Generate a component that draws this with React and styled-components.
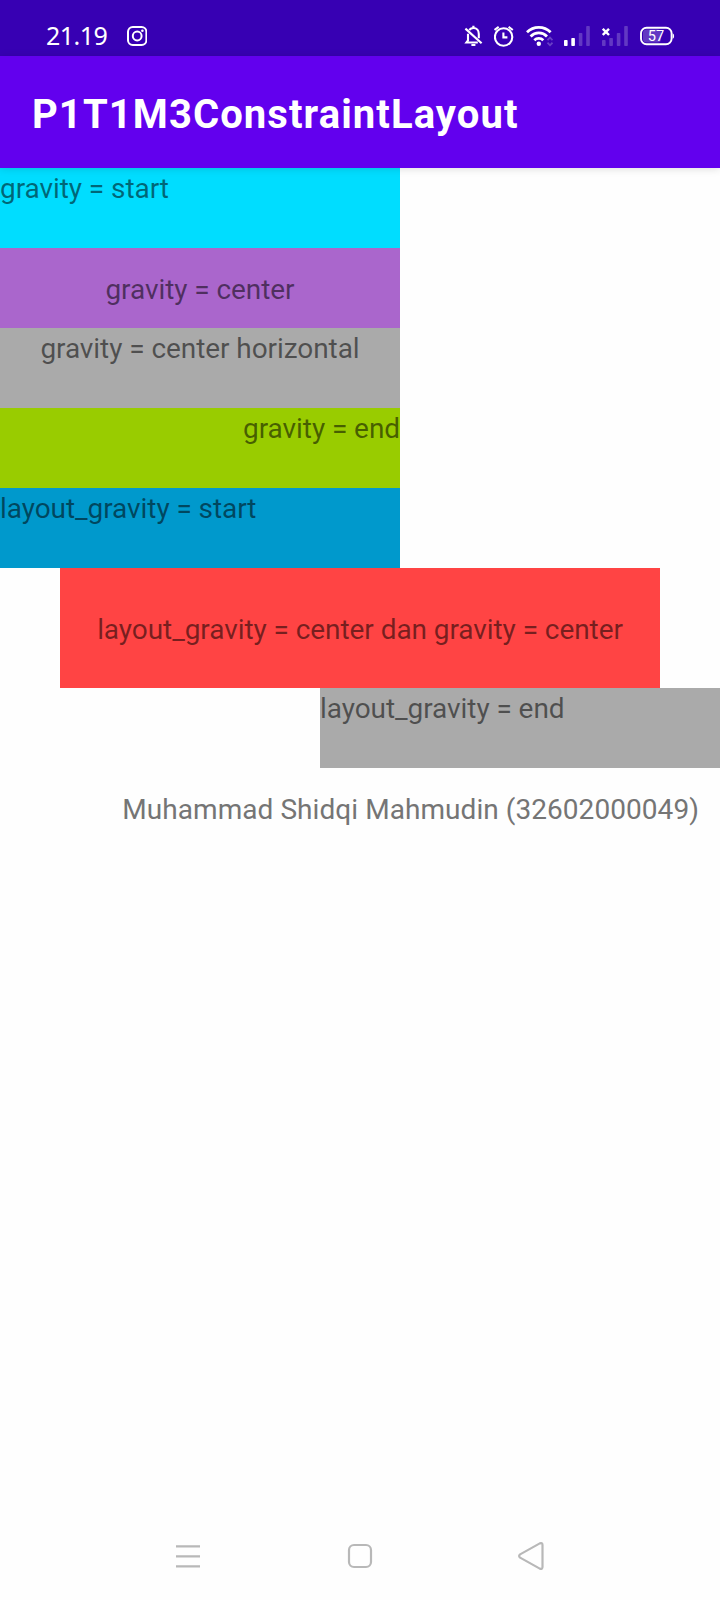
import React from "react";
import styled, { createGlobalStyle } from "styled-components";

const GlobalStyle = createGlobalStyle`
  body { margin: 0; background: #fff; }
  * { box-sizing: border-box; }
`;

const Screen = styled.div`
  width: 720px;
  height: 1600px;
  display: flex;
  flex-direction: column;
  background: #fefefe;
  font-family: Roboto, "Liberation Sans", sans-serif;
  overflow: hidden;
`;

const StatusBar = styled.header`
  height: 56px;
  flex: none;
  display: flex;
  align-items: flex-start;
  padding: 15px 44px 0 46px;
  background: #3700b3;
  color: #fff;
`;

const Clock = styled.span`
  flex: none;
  width: 81px;
  font: 400 25px/40px "Noto Sans", sans-serif;
  letter-spacing: -0.5px;
  white-space: nowrap;
`;

const StatusIcon = styled.svg`
  display: block;
  flex: none;
  width: ${(p) => p.$w}px;
  height: 28px;
  margin-left: ${(p) => p.$gap || 0}px;
  margin-top: 7px;
`;

const AppBar = styled.div`
  height: 112px;
  flex: none;
  display: flex;
  align-items: center;
  padding: 6px 32px 0;
  background: #6200ee;
  box-shadow: 0 1px 8px rgba(0, 0, 0, 0.13);
  z-index: 1;
`;

const Title = styled.h1`
  margin: 0;
  font-size: 40px;
  line-height: 48px;
  font-weight: 700;
  letter-spacing: 1.08px;
  color: #fff;
  white-space: nowrap;
`;

const Content = styled.main`
  flex: 1;
  display: flex;
  flex-direction: column;
`;

const Label = styled.div`
  flex: none;
  display: flex;
  width: ${(p) => p.$width || 400}px;
  height: ${(p) => p.$height || 80}px;
  padding-top: ${(p) => (p.$align === "center" ? 4 : 2)}px;
  align-self: ${(p) => p.$self || "flex-start"};
  align-items: ${(p) => p.$align || "flex-start"};
  justify-content: ${(p) => p.$justify || "flex-start"};
  background: ${(p) => p.$color};
  color: rgba(0, 0, 0, 0.54);
  font-size: 28px;
  line-height: 38px;
  letter-spacing: -0.07px;
  white-space: nowrap;
`;

const Author = styled.p`
  margin: 23px 21px 0 0;
  align-self: flex-end;
  color: #757575;
  font-size: 28px;
  line-height: 38px;
  letter-spacing: 0.06px;
  white-space: nowrap;
`;

const NavBar = styled.nav`
  height: 88px;
  flex: none;
  display: flex;
  justify-content: space-between;
  align-items: center;
  padding: 0 174px;
`;

const NavIcon = styled.svg`
  display: block;
  width: 28px;
  height: 28px;
  fill: none;
  stroke: #b8b8b8;
  stroke-width: 2.2;
  stroke-linejoin: round;
`;

const labels = [
  { text: "gravity = start", $color: "#00ddff" },
  { text: "gravity = center", $color: "#aa66cc", $align: "center", $justify: "center" },
  { text: "gravity = center horizontal", $color: "#aaaaaa", $justify: "center" },
  { text: "gravity = end", $color: "#99cc00", $justify: "flex-end" },
  { text: "layout_gravity = start", $color: "#0099cc" },
  {
    text: "layout_gravity = center dan gravity = center",
    $color: "#ff4444",
    $width: 600,
    $height: 120,
    $self: "center",
    $align: "center",
    $justify: "center",
  },
  { text: "layout_gravity = end", $color: "#aaaaaa", $self: "flex-end" },
];

function Bars({ active }) {
  return [
    [0, 40, 6],
    [7.3, 38, 8],
    [14.8, 33, 13],
    [22.2, 26, 20],
  ].map(([x, y, h], i) => (
    <rect key={x} x={x} y={y} width="3.6" height={h} rx="0.8" fill="#fff" opacity={i < active ? 1 : 0.22} />
  ));
}

function StatusIcons() {
  return (
    <>
      <StatusIcon $w={20} viewBox="127 22 20 28" fill="none" stroke="#fff">
        <rect x="128" y="27" width="18.4" height="18" rx="4.8" strokeWidth="2" />
        <circle cx="137.2" cy="36" r="4.4" strokeWidth="2" />
        <circle cx="142.4" cy="30.8" r="1.3" fill="#fff" stroke="none" />
      </StatusIcon>
      <StatusIcon $w={20} $gap={317} viewBox="464 22 20 28" fill="none" stroke="#fff" strokeWidth="2.1">
        <path d="M469.2 30C470.4 28.6 471.8 28 473.4 28c3.4 0 5.4 2.5 5.4 6v4.3M468 33.8v6.5l-1.6 2.2h11.4" />
        <path d="M465.4 28.6l16.2 14.6" />
        <path d="M473.4 25.8v2M471.4 45h4" strokeWidth="2.2" />
      </StatusIcon>
      <StatusIcon $w={20} $gap={10} viewBox="494 22 20 28" fill="none" stroke="#fff" strokeWidth="2.1">
        <circle cx="503.6" cy="37" r="8.7" />
        <path d="M503.4 32.4v5h4M494.5 30l4.2-3.2M508.6 26.8l4.2 3.2" />
      </StatusIcon>
      <StatusIcon $w={27} $gap={12} viewBox="526 22 27 28" fill="none" stroke="#fff">
        <path d="M527 32.2a16.6 16.6 0 0 1 23.6 0M530.6 36.4a11.5 11.5 0 0 1 16.4 0M534.3 40.3a6.4 6.4 0 0 1 9 0" strokeWidth="2.8" />
        <circle cx="538.8" cy="43.8" r="2.2" fill="#fff" stroke="none" />
        <path d="M547.5 40.2l2.5-2.6 2.5 2.6M547.5 42.7l2.5 2.6 2.5-2.6" strokeWidth="1.8" opacity=".25" />
      </StatusIcon>
      <StatusIcon $w={26} $gap={11} viewBox="0 22 26 28">
        <Bars active={2} />
      </StatusIcon>
      <StatusIcon $w={26} $gap={12} viewBox="0 22 26 28">
        <Bars active={0} />
        <path d="M.8 28.8l6.2 6.2M7 28.8L.8 35" stroke="#fff" strokeWidth="2.4" />
      </StatusIcon>
      <StatusIcon $w={35} $gap={12} viewBox="640 22 35 28">
        <rect x="643" y="29.6" width="18" height="12.8" rx="3.5" fill="#fff" opacity=".22" />
        <rect x="641" y="27.7" width="30.6" height="16.6" rx="5.6" fill="none" stroke="#fff" strokeWidth="1.9" />
        <path d="M672.6 33.2q1.5.4 1.5 2.8t-1.5 2.8z" fill="#fff" />
        <text x="656" y="41.3" textAnchor="middle" fontFamily="Roboto, sans-serif" fontSize="14.6" fill="#fff">
          57
        </text>
      </StatusIcon>
    </>
  );
}

export default function App() {
  return (
    <>
      <GlobalStyle />
      <Screen>
        <StatusBar>
          <Clock>21.19</Clock>
          <StatusIcons />
        </StatusBar>
        <AppBar>
          <Title>P1T1M3ConstraintLayout</Title>
        </AppBar>
        <Content>
          {labels.map(({ text, ...layout }) => (
            <Label key={text} {...layout}>
              {text}
            </Label>
          ))}
          <Author>Muhammad Shidqi Mahmudin (32602000049)</Author>
        </Content>
        <NavBar>
          <NavIcon viewBox="0 0 28 28">
            <path d="M2 4.3h24M2 14.3h24M2 24.3h24" />
          </NavIcon>
          <NavIcon viewBox="0 0 28 28">
            <rect x="3" y="3" width="22" height="22" rx="5" />
          </NavIcon>
          <NavIcon viewBox="0 0 28 28">
            <path d="M2.1 12.4L21.8 1.4Q24.4.4 24.5 3v22q-.1 2.6-2.7 1.6L2.1 15.6Q.1 14 2.1 12.4z" />
          </NavIcon>
        </NavBar>
      </Screen>
    </>
  );
}
